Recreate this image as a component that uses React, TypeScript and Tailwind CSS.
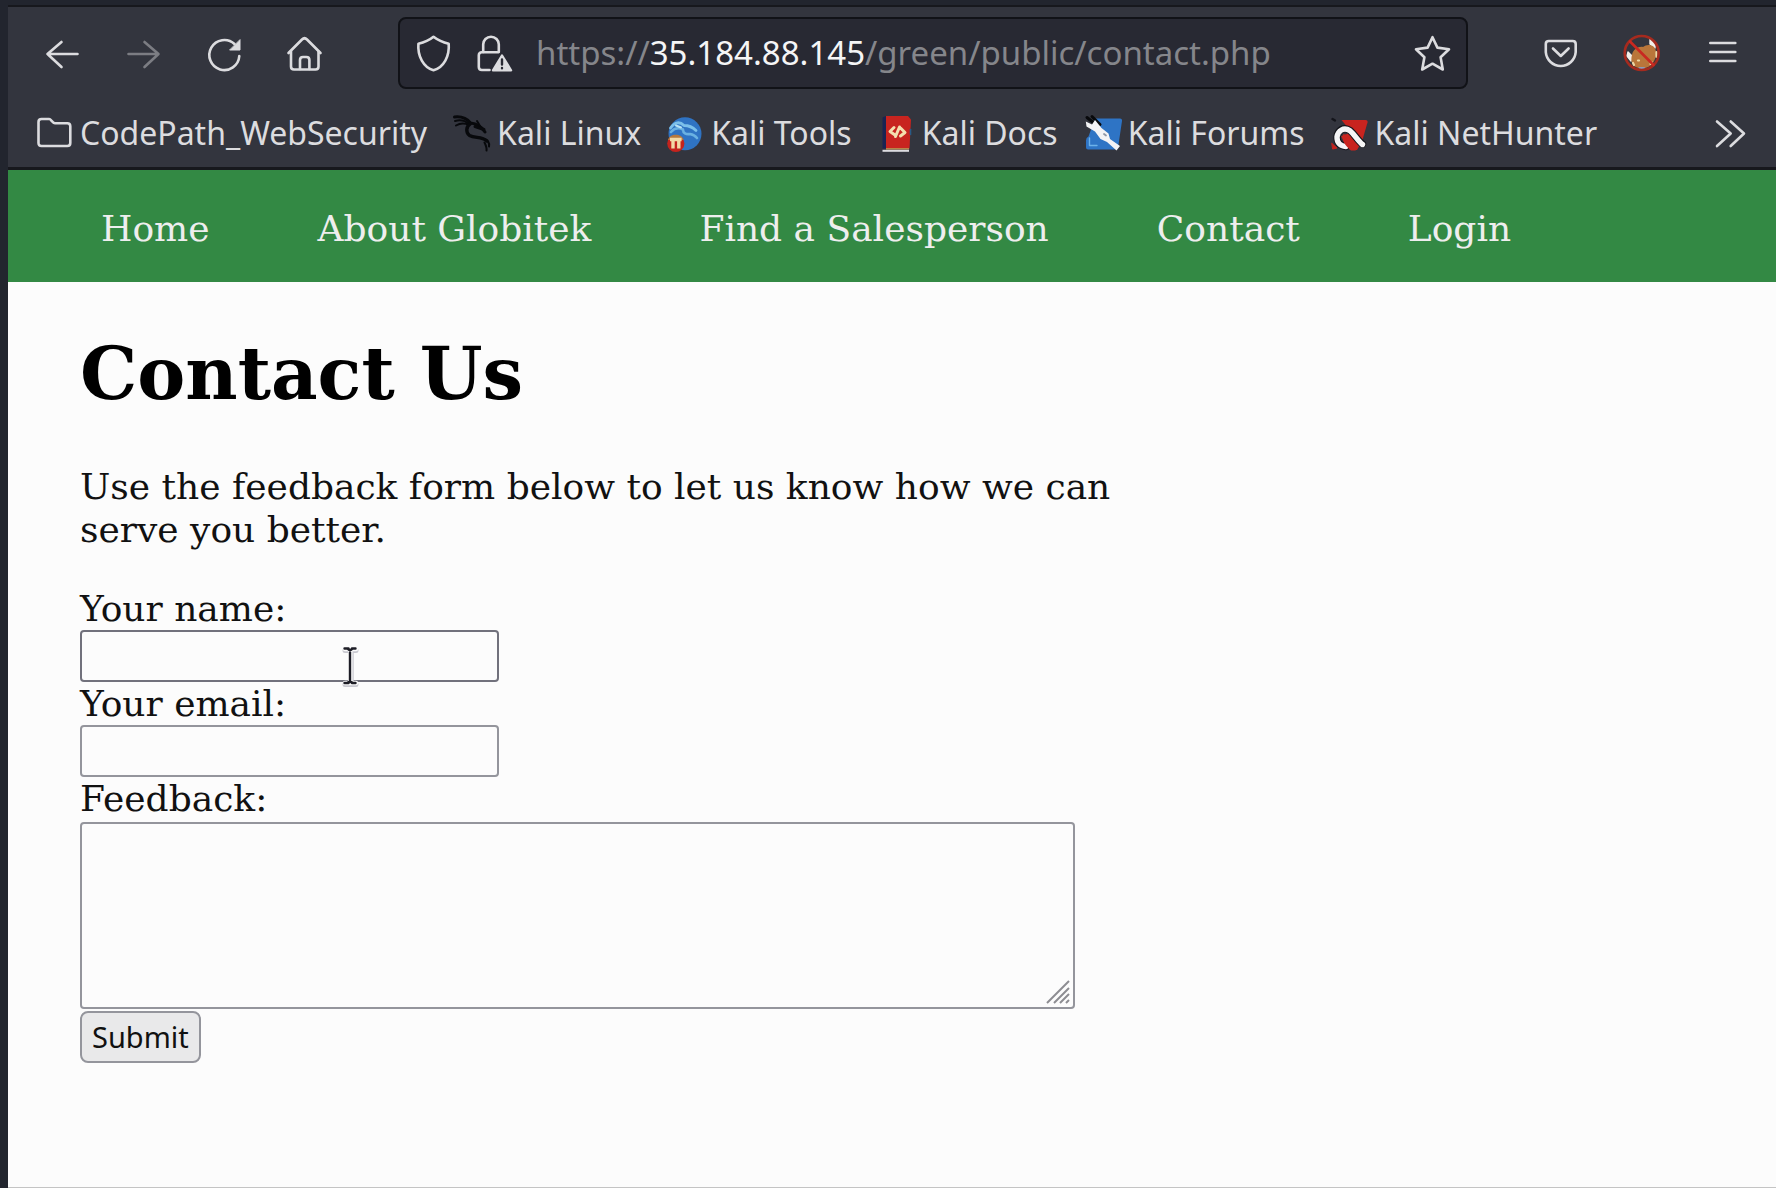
import type { ReactNode } from "react";

function Icon({ children, className = "" }: { children: ReactNode; className?: string }) {
  return (
    <svg
      aria-hidden="true"
      viewBox="0 0 36 36"
      fill="none"
      stroke="currentColor"
      strokeWidth="2.6"
      strokeLinecap="round"
      strokeLinejoin="round"
      className={`size-9 shrink-0 overflow-visible ${className}`}
    >
      {children}
    </svg>
  );
}

function BackIcon() {
  return (
    <Icon>
      <path d="M33.5 19H3.5M17.5 7L3.5 19L17.5 32" />
    </Icon>
  );
}

function ForwardIcon() {
  return (
    <Icon>
      <path d="M3.5 19H33M19.5 7L33.5 19L19.5 32" />
    </Icon>
  );
}

function ReloadIcon() {
  return (
    <Icon>
      <path d="M33.3 21A15 15 0 1 1 28.5 9" />
      <path d="M34 5V15H24Z" fill="currentColor" strokeWidth="1" />
    </Icon>
  );
}

function HomeIcon() {
  return (
    <Icon>
      <path d="M1.5 18L15 4.5Q17.5 2 20 4.5L33.5 18" />
      <path d="M4 16.5V31.5Q4 34.5 7 34.5H28.5Q31.5 34.5 31.5 31.5V16.5" />
      <path d="M13 34V25Q13 22 16 22H19.4Q22.4 22 22.4 25V34" />
    </Icon>
  );
}

function ShieldIcon() {
  return (
    <Icon>
      <path d="M18.5 1.8C14 5.5 9 7.5 3.4 8.8C2.4 21 8.5 32.5 18.5 35.2C28.8 32.5 34.7 21 33.7 8.8C28.3 7.5 23.3 5.5 18.5 1.8Z" />
    </Icon>
  );
}

function LockWarningIcon() {
  return (
    <Icon>
      <path d="M6.2 17V9.5A7.8 7.8 0 0 1 21.8 9.5V17" />
      <path d="M12.5 35H4.8Q1.8 35 1.8 32V20.3Q1.8 17.3 4.8 17.3H21" />
      <path d="M25 20.5L34 35.3H16Z" fill="currentColor" strokeWidth="2.4" />
      <path d="M25 24.5V29.5M25 33V33.2" stroke="#282933" strokeWidth="2.4" />
    </Icon>
  );
}

function StarIcon() {
  return (
    <Icon>
      <path d="M17.5 2.2L22.4 12.6L34 14.2L25.6 22.3L27.8 34.5L17.5 28.7L7.2 34.5L9.4 22.3L1 14.2L12.6 12.6Z" />
    </Icon>
  );
}

function PocketIcon() {
  return (
    <Icon>
      <path d="M5.8 6H29.7Q32.7 6 32.7 9V17.2A15 15 0 0 1 2.8 17.2V9Q2.8 6 5.8 6Z" />
      <path d="M10 13.5L17.8 21L25.6 13.5" />
    </Icon>
  );
}

function BlockedCookieIcon() {
  return (
    <Icon>
      <circle cx="17.7" cy="18" r="17" fill="#33353e" stroke="none" />
      <path d="M4 17L8 21L7 26L3 21ZM26 4L31 9L31 13L26 9Z" fill="#f4efe8" stroke="#f4efe8" strokeWidth="1.4" />
      <path
        d="M8 20C9 14 15 11 19 12C22 10 26 9 30 12C34 16 32 26 27 30C22 35 13 34 9 30C7 27 7 23 8 20Z"
        fill="#b9763a"
        stroke="none"
      />
      <path d="M14 25.5H15M26.5 29L28 27.5M32.5 17V22M9 28L10 30" stroke="#ecd7a4" strokeWidth="2.2" />
      <path d="M15.5 33H20" stroke="#8a9cba" strokeWidth="2" />
      <circle cx="17.7" cy="18" r="17" stroke="#a52a1e" strokeWidth="2.6" />
      <path d="M6 6.5L29.5 30" stroke="#c92820" strokeWidth="2.6" />
    </Icon>
  );
}

function MenuIcon() {
  return (
    <Icon>
      <path d="M5.3 8H30.3M5.3 17H30.3M5.3 26H30.3" />
    </Icon>
  );
}

function FolderIcon() {
  return (
    <Icon>
      <path d="M5.5 4H13.2C15 4 16.5 8.2 19 8.2H31.3Q34.3 8.2 34.3 11.2V28Q34.3 31 31.3 31H5.5Q2.5 31 2.5 28V7Q2.5 4 5.5 4Z" />
    </Icon>
  );
}

function OverflowIcon() {
  return (
    <Icon>
      <path d="M5 6.5L18.7 18.5L5 31M18.7 6.5L32 18.5L18.7 31" />
    </Icon>
  );
}

function KaliDragonIcon() {
  return (
    <Icon className="text-[#08090c]">
      <path d="M1.5 2C8 1.3 13 2.3 17.5 8C23 8.5 28 10.5 32 17" strokeWidth="3" />
      <path d="M2 6C7 4.5 12 5.5 16 9M3 10.5C7 8 12 8 16 10M24 6L27 11" strokeWidth="2" />
      <path d="M17.5 8.5C13 11.5 12.5 17.5 16.5 20.5C22 23.5 29 21 34 26" strokeWidth="3.4" />
      <path d="M31 24C36 25.5 36.5 28.5 36 31.5M31.5 27.5C33 30.5 34 32.5 33.5 35.5" strokeWidth="2" />
      <path d="M22 11.5L31 14.5" strokeWidth="3" />
    </Icon>
  );
}

function KaliToolsIcon() {
  return (
    <Icon>
      <circle cx="18" cy="18.8" r="16.5" fill="#2f73c3" stroke="none" />
      <path d="M3.5 13C8 6.5 13 6.5 17 10.5C21 10.5 25 11.5 29 15.5" stroke="#7cc0ea" strokeWidth="2.8" />
      <path d="M4 17C8 12.5 12 12.5 16 14.5C16 18.5 19 19.5 23 19C26 19.5 28 20.5 30 23" stroke="#6ab1e2" strokeWidth="2.6" />
      <path d="M9 10.5L14 12.5" stroke="#b7e2f5" strokeWidth="2" />
      <circle cx="8.8" cy="28.5" r="8.6" fill="#c4231d" stroke="none" />
      <path d="M1 25C2.5 18 15 18 16.6 25Z" fill="#b5793f" stroke="none" />
      <path d="M3 24.5H14.6M6 25V33.5M11.8 25V33.5" stroke="#f2d9a5" strokeWidth="3.4" strokeLinecap="butt" />
    </Icon>
  );
}

function KaliDocsIcon() {
  return (
    <Icon>
      <path d="M4.5 2.5L8 1V33.5H4.5Z" fill="#1a2452" stroke="none" />
      <path d="M8 1H30L33 4.5L31.5 33.5H8Z" fill="#c8241f" stroke="none" />
      <path d="M32.5 14.5V19.5" stroke="#285a86" strokeWidth="1.6" />
      <path d="M8 33.8H31" stroke="#b98549" strokeWidth="1.6" strokeLinecap="butt" />
      <path d="M4.5 35.8H31" stroke="#dcdce0" strokeWidth="2" strokeLinecap="butt" />
      <path d="M16 12.5L12 16.5L17 20M22.5 13L27 17.5L22.5 21M21.5 12L17.5 21.5" stroke="#f4dfae" strokeWidth="3" />
    </Icon>
  );
}

function KaliForumsIcon() {
  return (
    <Icon>
      <path d="M11 3.5H36Q38.3 3.5 38 6L34.5 29.5Q34 34.5 30 34.5H4Q2 34.5 2 32.5V25.5Q2 22.5 4.5 21.5Z" fill="#2e74c5" stroke="none" />
      <path d="M5.5 23V30.5H13" stroke="#6db2ea" strokeWidth="1.4" />
      <path d="M3 2.5L13 10.5M8 1.5L16 9.5" stroke="#08090c" strokeWidth="3" />
      <path d="M1.8 6.5L8 9.5L11 5L17.5 13L24.5 18.5L26 24L36 31L32.5 35.5L23 27L16.5 24L11 16.5L2.5 11.5Z" fill="#f3f3f5" stroke="none" />
      <path d="M20 19L22 20.5" stroke="#8e97a6" strokeWidth="1.8" />
    </Icon>
  );
}

function KaliNetHunterIcon() {
  return (
    <Icon>
      <path d="M10.5 5H34.5Q37 5 36.5 7.5L31 26.5L20 16.5Z" fill="#c8241f" stroke="none" />
      <path d="M1.5 4L4 5.5" stroke="#14151b" strokeWidth="2.4" />
      <path d="M10 21.5L17 18.5L29 29.5L26 35H20Z" fill="#c8241f" stroke="none" />
      <path d="M1 28.5L6 33L2 34Z" fill="#c8241f" stroke="#c8241f" strokeWidth="1" />
      <path d="M31.5 29C27 26 24 20 19 15.5C12.5 11 7 15.5 6 21.5C5.8 27.5 9 31 15 31.5" stroke="#14151b" strokeWidth="7.4" />
      <path d="M31.5 29.5C27 26 24 20 19 15.8C12.5 11.5 7 16 6 21.8C5.8 27.5 9 31 15 31.5" stroke="#f5f5f6" strokeWidth="5.4" />
      <path d="M12 19.5C16 18 20 26.5 27.5 32L24.5 35.5H20C14.5 31 9.5 24 12 19.5Z" fill="#c8241f" stroke="none" />
    </Icon>
  );
}

const bookmarks = [
  { label: "CodePath_WebSecurity", icon: <FolderIcon /> },
  { label: "Kali Linux", icon: <KaliDragonIcon /> },
  { label: "Kali Tools", icon: <KaliToolsIcon /> },
  { label: "Kali Docs", icon: <KaliDocsIcon /> },
  { label: "Kali Forums", icon: <KaliForumsIcon /> },
  { label: "Kali NetHunter", icon: <KaliNetHunterIcon /> },
];

const links = ["Home", "About Globitek", "Find a Salesperson", "Contact", "Login"];

function BrowserChrome() {
  return (
    <header className="border-t-2 border-b-3 border-[#17181d] bg-[#33353e] font-['Noto_Sans',sans-serif] text-[#dcdcdf]">
      <div className="flex h-[92px] items-center pr-[35px] pl-9">
        <div className="flex gap-[45px]">
          <button type="button" aria-label="Back"><BackIcon /></button>
          <button type="button" aria-label="Forward" disabled className="text-[#7c7d83]"><ForwardIcon /></button>
          <button type="button" aria-label="Reload"><ReloadIcon /></button>
          <button type="button" aria-label="Home page"><HomeIcon /></button>
        </div>
        <div className="mx-[75px] flex h-18 min-w-0 flex-1 items-center rounded-lg border-2 border-[#111217] bg-[#282933] px-[15px]">
          <button type="button" aria-label="Tracking protection"><ShieldIcon /></button>
          <button type="button" aria-label="Connection not secure" className="ml-[26px]"><LockWarningIcon /></button>
          <div
            role="textbox"
            aria-label="Address"
            contentEditable
            suppressContentEditableWarning
            className="mr-5 ml-[23px] min-w-0 flex-1 overflow-hidden text-[33px] leading-[48px] whitespace-nowrap text-[#85868b] outline-none"
          >
            https://<span className="text-[#f5f5f6]">35.184.88.145</span>/green/public/contact.php
          </div>
          <button type="button" aria-label="Bookmark this page"><StarIcon /></button>
        </div>
        <div className="flex gap-[45px]">
          <button type="button" aria-label="Save to Pocket"><PocketIcon /></button>
          <button type="button" aria-label="Cookie blocker"><BlockedCookieIcon /></button>
          <button type="button" aria-label="Menu"><MenuIcon /></button>
        </div>
      </div>
      <div className="flex h-[68px] items-center justify-between px-7">
        <div className="flex gap-[26px]">
          {bookmarks.map((b) => (
            <button key={b.label} type="button" className="flex items-center gap-2 text-[32px] leading-[44px] whitespace-nowrap">
              {b.icon}
              {b.label}
            </button>
          ))}
        </div>
        <button type="button" aria-label="More bookmarks"><OverflowIcon /></button>
      </div>
    </header>
  );
}

function IBeam() {
  return (
    <svg
      aria-hidden="true"
      viewBox="0 0 18 42"
      fill="none"
      strokeLinecap="round"
      className="pointer-events-none absolute top-4 left-[261px] h-[42px] w-[18px]"
    >
      <path d="M4 4.5H15M10.2 5V37M4 38.5H15" stroke="#c9c9d0" strokeWidth="5" />
      <path d="M4 3H15M9.3 4V36M4 37H15" stroke="#fcfcfc" strokeWidth="4.4" />
      <path d="M3.5 2.5H7.5M11 2.5H14.5M9 4V36M3.5 37H7.5M11 37H14.5M7 3L9 4.5L11 3M7 36.5L9 35L11 36.5" stroke="#1d1d26" strokeWidth="2.4" />
    </svg>
  );
}

export default function App() {
  return (
    <div className="flex min-h-screen flex-col bg-[#22252e] pt-[5px]">
      <div className="flex flex-1 flex-col pl-2">
        <BrowserChrome />
        <div className="flex flex-1 flex-col border-b border-[#c4c4c4] bg-[#fcfcfc] font-['DejaVu_Serif',serif] text-4xl leading-[43px] text-[#111111]">
          <nav className="bg-[#338944] px-[93px] pt-[37px] pb-8">
            <ul className="flex gap-[108px] whitespace-nowrap text-[#eeeeee]">
              {links.map((l) => (
                <li key={l}><a href="#">{l}</a></li>
              ))}
            </ul>
          </nav>
          <main className="px-18 pt-[49px]">
            <h1 className="mb-12 text-7xl leading-[86px] font-bold text-black">Contact Us</h1>
            <p className="mb-9 max-w-[1080px]">
              Use the feedback form below to let us know how we can serve you better.
            </p>
            <form className="flex max-w-[995px] flex-col items-start" onSubmit={(e) => e.preventDefault()}>
              <label htmlFor="name">Your name:</label>
              <div className="relative">
                <input id="name" type="text" className="block h-[52px] w-[419px] rounded-sm border-2 border-[#71717c] px-1" />
                <IBeam />
              </div>
              <label htmlFor="email">Your email:</label>
              <input id="email" type="text" className="h-[52px] w-[419px] rounded-sm border-2 border-[#94959c] px-1" />
              <label htmlFor="feedback">Feedback:</label>
              <div className="relative mt-[2px] w-full">
                <textarea id="feedback" className="block h-[187px] w-full resize-none rounded-sm border-2 border-[#94959c] px-1" />
                <svg aria-hidden="true" viewBox="0 0 24 24" stroke="#8d8d92" strokeWidth="2" className="pointer-events-none absolute right-[5px] bottom-[5px] size-6">
                  <path d="M1 23L23 1M8 23L23 8M14 23L23 14M20 23L23 20" />
                </svg>
              </div>
              <button type="submit" className="mt-[2px] h-[52px] rounded-lg border-2 border-[#94959c] bg-[#e9e9ea] px-[10px] font-['Noto_Sans',sans-serif] text-[29px] leading-10">
                Submit
              </button>
            </form>
          </main>
        </div>
      </div>
    </div>
  );
}
